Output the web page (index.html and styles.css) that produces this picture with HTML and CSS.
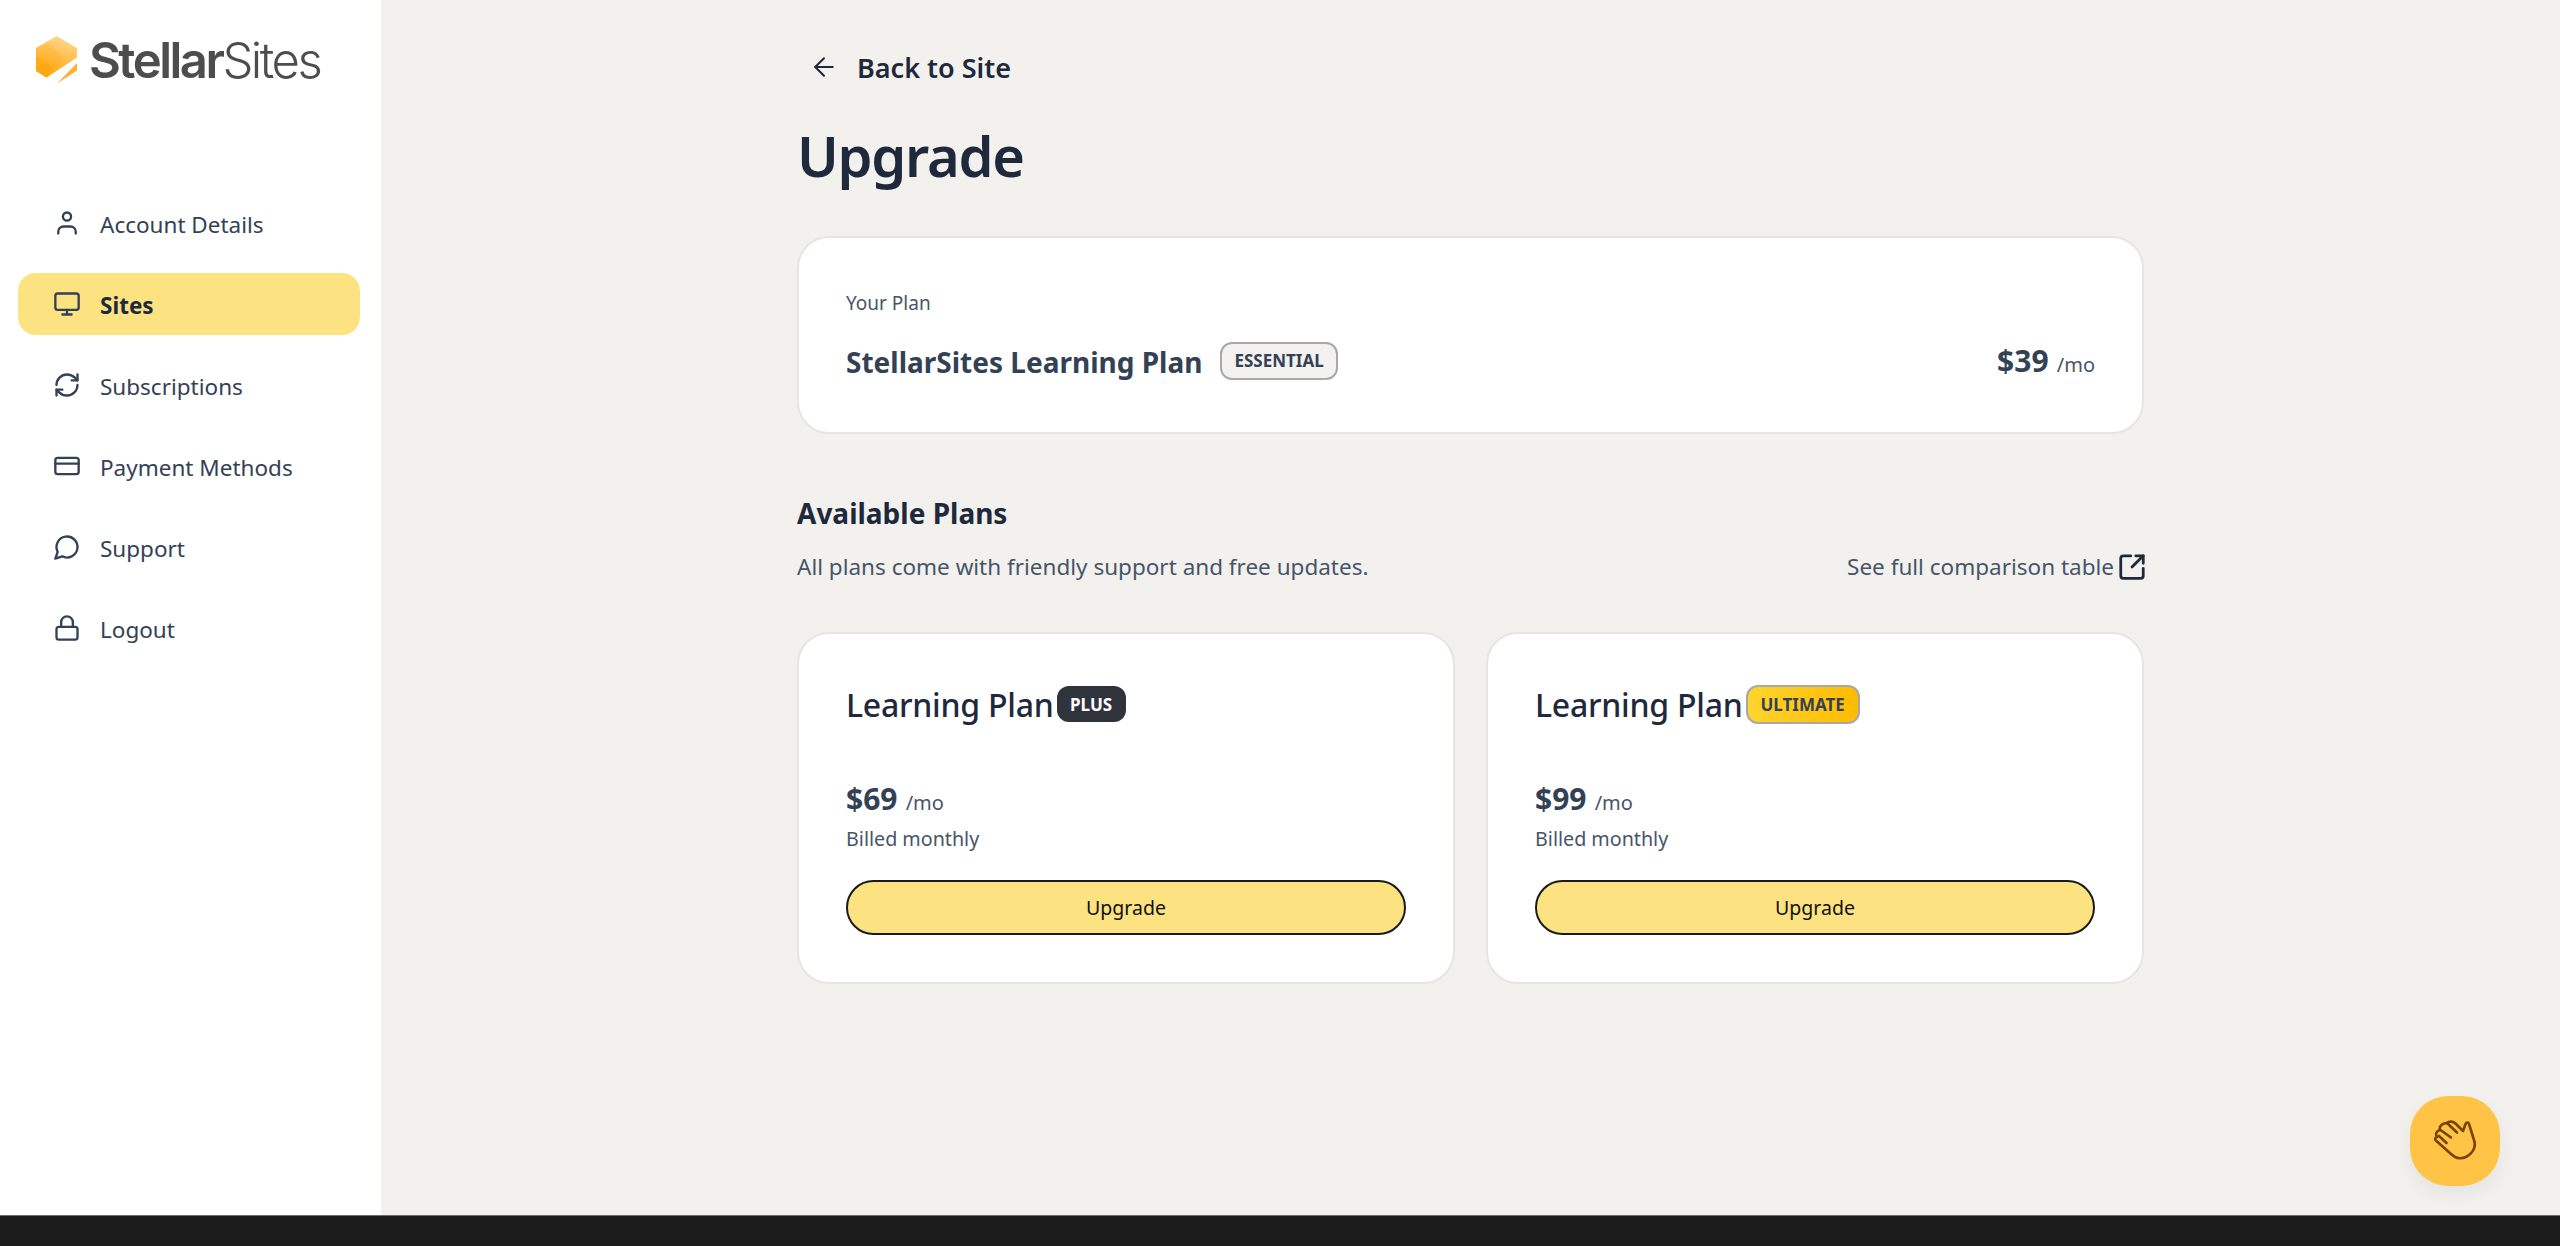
FILE: index.html
```html
<!DOCTYPE html>
<html lang="en">
<head>
    <meta charset="UTF-8">
    <meta name="viewport" content="width=device-width, initial-scale=1.0">
    <title>Upgrade</title>
    <link rel="stylesheet" href="styles.css">
</head>
<body>
    <div class="app">
        <aside class="sidebar">
            <div class="logo">
                <svg class="logo-mark" viewBox="0 0 42 48" aria-hidden="true">
                    <defs>
                        <linearGradient id="hex-fill" x1="0.6" y1="0" x2="0.35" y2="1">
                            <stop offset="0" stop-color="#ffd88a"/>
                            <stop offset="1" stop-color="#ffa60f"/>
                        </linearGradient>
                    </defs>
                    <path d="M20.500 0 41 12 41 21.500 10.500 41.500 0 35 0 12Z" fill="url(#hex-fill)"/>
                    <path d="M0 12 12 7 28 22 10.500 41.500 0 35Z" fill="#ffa60f" opacity="0.25"/>
                    <path d="M0 20 18 30 10.500 41.500 0 35Z" fill="#ffa60f" opacity="0.55"/>
                    <path d="M21 47.500 41 27 41 34.500Z" fill="#ffb02e"/>
                </svg>
                <span class="logo-text"><b>Stellar</b>Sites</span>
            </div>

            <nav class="nav">
                <a class="nav-item">
                    <svg class="nav-icon" viewBox="0 0 24 24"><circle cx="12" cy="6.500" r="3.500"/><path d="M4.500 21v-1.500a4.500 4.500 0 0 1 4.500-4.500h6a4.500 4.500 0 0 1 4.500 4.500V21"/></svg>
                    Account Details
                </a>
                <a class="nav-item active">
                    <svg class="nav-icon" viewBox="0 0 24 24"><rect x="2" y="3" width="20" height="14" rx="2"/><path d="M8 21h8M12 17v4"/></svg>
                    Sites
                </a>
                <a class="nav-item">
                    <svg class="nav-icon" viewBox="0 0 24 24"><path d="M3 12a9 9 0 0 1 9-9 9.750 9.750 0 0 1 6.740 2.740L21 8"/><path d="M21 3v5h-5"/><path d="M21 12a9 9 0 0 1-9 9 9.750 9.750 0 0 1-6.740-2.740L3 16"/><path d="M8 16H3v5"/></svg>
                    Subscriptions
                </a>
                <a class="nav-item">
                    <svg class="nav-icon" viewBox="0 0 24 24"><rect x="2" y="5" width="20" height="14" rx="2"/><path d="M2 10h20"/></svg>
                    Payment Methods
                </a>
                <a class="nav-item">
                    <svg class="nav-icon" viewBox="0 0 24 24"><path d="M7.900 20A9 9 0 1 0 4 16.100L2 22Z"/></svg>
                    Support
                </a>
                <a class="nav-item">
                    <svg class="nav-icon" viewBox="0 0 24 24"><rect x="3" y="11" width="18" height="11" rx="2"/><path d="M7 11V7a5 5 0 0 1 10 0v4"/></svg>
                    Logout
                </a>
            </nav>
        </aside>

        <main class="main">
            <div class="content">
                <a class="back-link">
                    <svg class="back-icon" viewBox="0 0 24 24"><path d="m12 19-7-7 7-7"/><path d="M19 12H5"/></svg>
                    Back to Site
                </a>
                <h1 class="page-title">Upgrade</h1>

                <section class="card current-plan">
                    <div>
                        <p class="current-label">Your Plan</p>
                        <div class="current-name">
                            <span>StellarSites Learning Plan</span>
                            <span class="badge badge-essential">Essential</span>
                        </div>
                    </div>
                    <div class="price current-price"><strong>$39</strong> <span>/mo</span></div>
                </section>

                <h2 class="section-title">Available Plans</h2>
                <div class="section-sub">
                    <span>All plans come with friendly support and free updates.</span>
                    <a class="compare-link">
                        See full comparison table
                        <svg class="compare-icon" viewBox="0 0 24 24"><path d="M21 13v6a2 2 0 0 1-2 2H5a2 2 0 0 1-2-2V5a2 2 0 0 1 2-2h6"/><path d="m21 3-9 9"/><path d="M15 3h6v6"/></svg>
                    </a>
                </div>

                <div class="plans">
                    <section class="card plan">
                        <div class="plan-name">Learning Plan <span class="badge badge-plus">Plus</span></div>
                        <div class="price"><strong>$69</strong> <span>/mo</span></div>
                        <p class="billed">Billed monthly</p>
                        <button class="upgrade-btn">Upgrade</button>
                    </section>
                    <section class="card plan">
                        <div class="plan-name">Learning Plan <span class="badge badge-ultimate">Ultimate</span></div>
                        <div class="price"><strong>$99</strong> <span>/mo</span></div>
                        <p class="billed">Billed monthly</p>
                        <button class="upgrade-btn">Upgrade</button>
                    </section>
                </div>
            </div>
        </main>
    </div>

    <button class="wave-btn" aria-label="Help">
        <svg viewBox="0 0 42 42">
            <path d="M2.500 21 17 34C22 39 29 40 35 35 40 31 42 26 40 20L35 4C34.500 2 32.500 2 31.500 4L29 11 22 4C19 1 15 1 13 3 9 3 4.500 6 6 10 2.500 11 1 14 3 17 .500 18 .500 20 2.500 21Z"/>
            <path d="M5 16 12.500 23M6.500 10 17 17.500M13 3 23 12.500"/>
        </svg>
    </button>
    <div class="bottom-bar"></div>
</body>
</html>
```

FILE: styles.css
```css
* {
    box-sizing: border-box;
}

body {
    font-family: "Noto Sans", Arial, sans-serif;
    margin: 0;
    height: 1246px;
    overflow: hidden;
    display: flex;
    flex-direction: column;
    background-color: #f3f1ee;
    color: #1e293b;
}

p,
h1,
h2 {
    margin: 0;
}

.app {
    display: flex;
    flex: 1;
    min-height: 0;
}

/* Sidebar */
.sidebar {
    width: 381px;
    flex-shrink: 0;
    background-color: white;
    padding: 36px 21px 0 18px;
}

.logo {
    display: flex;
    align-items: flex-start;
    gap: 11px;
    height: 156px;
    padding-left: 18px;
}

.logo-mark {
    width: 42px;
    height: 48px;
    flex-shrink: 0;
}

.logo-text {
    font-family: Inter, sans-serif;
    font-size: 49px;
    font-weight: 300;
    line-height: 48px;
    letter-spacing: -2.500px;
    color: #4d4d4d;
    margin-top: 1px;
}

.logo-text b {
    font-weight: 600;
}

.nav {
    display: flex;
    flex-direction: column;
    gap: 19px;
}

.nav-item {
    display: flex;
    align-items: center;
    gap: 19px;
    height: 62px;
    padding: 3px 0 0 35px;
    border-radius: 18px;
    font-size: 22.500px;
    color: #334155;
}

.nav-item.active {
    background-color: #fde282;
    font-weight: 700;
    color: #1e293b;
}

.nav-icon {
    width: 28px;
    height: 28px;
    margin-top: -3px;
    fill: none;
    stroke: #334155;
    stroke-width: 2;
    stroke-linecap: round;
    stroke-linejoin: round;
}

/* Main column */
.main {
    flex: 1;
    display: flex;
    justify-content: center;
}

.content {
    width: 1347px;
    padding-top: 45px;
}

.back-link {
    display: flex;
    align-items: center;
    gap: 18px;
    height: 44px;
    padding-left: 12px;
    font-size: 27px;
    font-weight: 600;
}

.back-icon {
    width: 30px;
    height: 30px;
    fill: none;
    stroke: currentColor;
    stroke-width: 1.600;
    stroke-linecap: round;
    stroke-linejoin: round;
}

.page-title {
    font-size: 56px;
    font-weight: 600;
    line-height: 76px;
    letter-spacing: -1.300px;
    margin-top: 28px;
}

.card {
    background-color: white;
    border: 2px solid #e6e5e2;
    border-radius: 32px;
}

.current-plan {
    display: flex;
    justify-content: space-between;
    align-items: flex-end;
    height: 198px;
    margin-top: 43px;
    padding: 0 47px 51px;
}

.current-label {
    font-size: 19px;
    color: #475569;
    line-height: 28px;
}

.current-name {
    display: flex;
    align-items: center;
    gap: 18px;
    margin-top: 26px;
    font-size: 28px;
    font-weight: 700;
    color: #334155;
}

.badge {
    display: inline-flex;
    align-items: center;
    height: 38px;
    padding: 0 12px;
    border-radius: 12px;
    font-size: 17px;
    font-weight: 700;
    text-transform: uppercase;
    line-height: 1;
}

.badge-essential {
    margin-top: -3px;
    background-color: #f3f2f0;
    border: 2px solid #a8a8a8;
    color: #334155;
}

.badge-plus {
    height: 36px;
    padding: 0 13.500px;
    background-color: #2f343c;
    color: white;
}

.badge-ultimate {
    height: 39px;
    padding: 0 13px;
    border: 2px solid #a8a8a8;
    background: linear-gradient(90deg, #ffd42e, #ffbb00);
    color: #334155;
}

.price {
    color: #334155;
    line-height: 44px;
}

.price strong {
    font-size: 30px;
    font-weight: 700;
}

.price span {
    font-size: 20px;
    margin-left: 4px;
    color: #475569;
}

.current-price {
    line-height: 30px;
}

.section-title {
    font-size: 28px;
    font-weight: 700;
    line-height: 40px;
    margin-top: 59px;
}

.section-sub {
    display: flex;
    justify-content: space-between;
    align-items: center;
    margin-top: 14px;
    font-size: 22.500px;
    line-height: 40px;
    color: #475569;
}

.compare-link {
    display: flex;
    align-items: center;
    gap: 3px;
    margin-right: -3px;
}

.compare-icon {
    width: 30px;
    height: 30px;
    fill: none;
    stroke: #1e293b;
    stroke-width: 2.200;
    stroke-linecap: round;
    stroke-linejoin: round;
}

.plans {
    display: grid;
    grid-template-columns: repeat(2, 1fr);
    gap: 31px;
    margin-top: 45px;
}

.plan {
    height: 352px;
    padding: 48px 47px 0;
}

.plan-name {
    display: flex;
    align-items: center;
    gap: 3px;
    height: 44px;
    font-size: 32px;
    font-weight: 500;
    letter-spacing: -0.250px;
}

.plan-name .badge {
    letter-spacing: 0;
}

.plan .price {
    margin-top: 51px;
}

.billed {
    font-size: 19.700px;
    line-height: 28px;
    color: #475569;
    margin-top: -1px;
}

.upgrade-btn {
    display: block;
    width: 100%;
    height: 55px;
    margin-top: 27px;
    background-color: #fde282;
    border: 2px solid #1a1a1a;
    border-radius: 28px;
    font-family: inherit;
    font-size: 19.500px;
    color: #111;
    cursor: pointer;
}

/* Floating help button */
.wave-btn {
    position: fixed;
    left: 2410px;
    top: 1096px;
    width: 90px;
    height: 90px;
    padding: 24px;
    border: none;
    border-radius: 38px;
    background-color: #ffc445;
    box-shadow: 0 8px 20px rgba(0, 0, 0, 0.06);
}

.wave-btn svg {
    display: block;
    width: 42px;
    height: 42px;
    fill: none;
    stroke: #7a4100;
    stroke-width: 2.600;
    stroke-linecap: round;
    stroke-linejoin: round;
}

.bottom-bar {
    height: 31px;
    flex-shrink: 0;
    background-color: #1c1c1c;
    border-top: 1px solid #6b6b6b;
}
```
